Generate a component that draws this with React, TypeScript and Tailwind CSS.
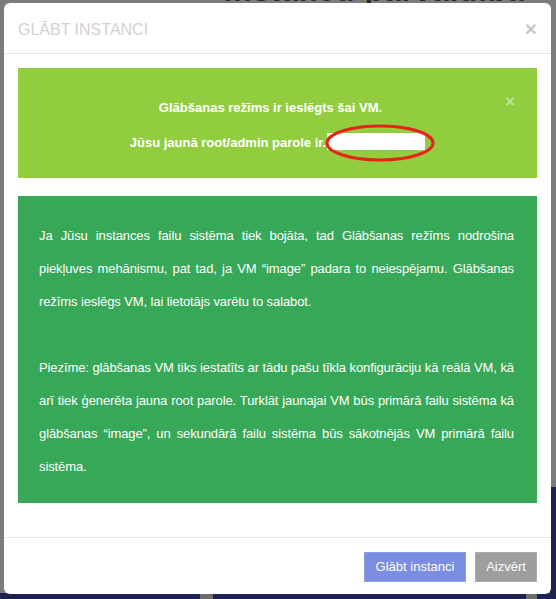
export default function App() {
  return (
    <div className="relative h-[599px] w-[556px] overflow-hidden bg-[#7c7c7c] font-['Liberation_Sans',Arial,sans-serif]">
      {/* page behind the backdrop */}
      <div className="absolute left-[224px] top-[-24px] whitespace-nowrap text-[30px] font-bold leading-none tracking-[1px] text-[#2b2b2b]">
        Instanču pārvaldība
      </div>
      <div className="absolute right-0 top-[487px] h-[112px] w-[6px] bg-[#1d2250]" />
      <div className="absolute bottom-0 left-0 h-[6px] w-full bg-[#1d2250]" />
      <div className="absolute bottom-0 left-[200px] h-[6px] w-[13px] bg-[#6d6d6d]" />
      <div className="absolute bottom-0 left-[526px] h-[6px] w-[11px] bg-[#6d6d6d]" />

      <div className="relative ml-[4px] mt-[3px] flex h-[591px] w-[547px] flex-col rounded-[6px] bg-white">
        <div className="flex h-[51px] items-center justify-between border-b border-[#e5e5e5] pl-[14px] pr-[14px]">
          <h4 className="pt-[3px] text-[16px] uppercase text-[#d2d2d2]">Glābt instanci</h4>
          <span className="text-[21px] font-bold leading-none text-[#c8c8c8]">×</span>
        </div>

        <div className="flex flex-1 flex-col gap-[18px] px-[14px] pt-[14px]">
          <div className="relative h-[110px] bg-[#91cd3f] pl-[15px] pr-[35px] pt-[30px] text-center text-[13px] font-bold text-white">
            <span className="absolute right-[22px] top-[25px] text-[17px] leading-none text-[#c3e496]">×</span>
            <p className="pl-[6px] leading-[20px]">Glābšanas režīms ir ieslēgts šai VM.</p>
            <p className="relative mt-[12px] pl-[20px] leading-[20px]">
              Jūsu jaunā root/admin parole ir.
              <span className="relative ml-[1px] inline-block h-[17px] w-[98px] translate-y-[3px] bg-white align-baseline">
                <svg className="absolute left-[-2px] top-[-9px]" width="110" height="38" viewBox="0 0 110 38">
                  <ellipse cx="55" cy="19" rx="53" ry="17" fill="none" stroke="#e8221b" strokeWidth="3" />
                </svg>
              </span>
            </p>
          </div>

          <div className="h-[307px] bg-[#37a858] pb-[20px] pl-[21px] pr-[23px] pt-[23px] text-justify text-[13px] leading-[33px] tracking-[-0.1px] text-white">
            <p>
              Ja Jūsu instances failu sistēma tiek bojāta, tad Glābšanas režīms nodrošina piekļuves mehānismu, pat tad, ja VM “image” padara to neiespējamu. Glābšanas režīms ieslēgs VM, lai lietotājs varētu to salabot.
            </p>
            <p className="mt-[33px]">
              Piezīme: glābšanas VM tiks iestatīts ar tādu pašu tīkla konfigurāciju kā reālā VM, kā arī tiek ģenerēta jauna root parole. Turklāt jaunajai VM būs primārā failu sistēma kā glābšanas “image”, un sekundārā failu sistēma būs sākotnējās VM primārā failu sistēma.
            </p>
          </div>
        </div>

        <div className="flex h-[57px] items-start justify-end gap-[9px] border-t border-[#e5e5e5] pr-[14px] pt-[14px]">
          <button className="h-[30px] w-[102px] border border-[#8b9be6] bg-[#7b8de0] text-[13px] text-white">Glābt instanci</button>
          <button className="h-[30px] w-[62px] border border-[#ababab] bg-[#9e9e9e] text-[13px] text-white">Aizvērt</button>
        </div>
      </div>
    </div>
  );
}
